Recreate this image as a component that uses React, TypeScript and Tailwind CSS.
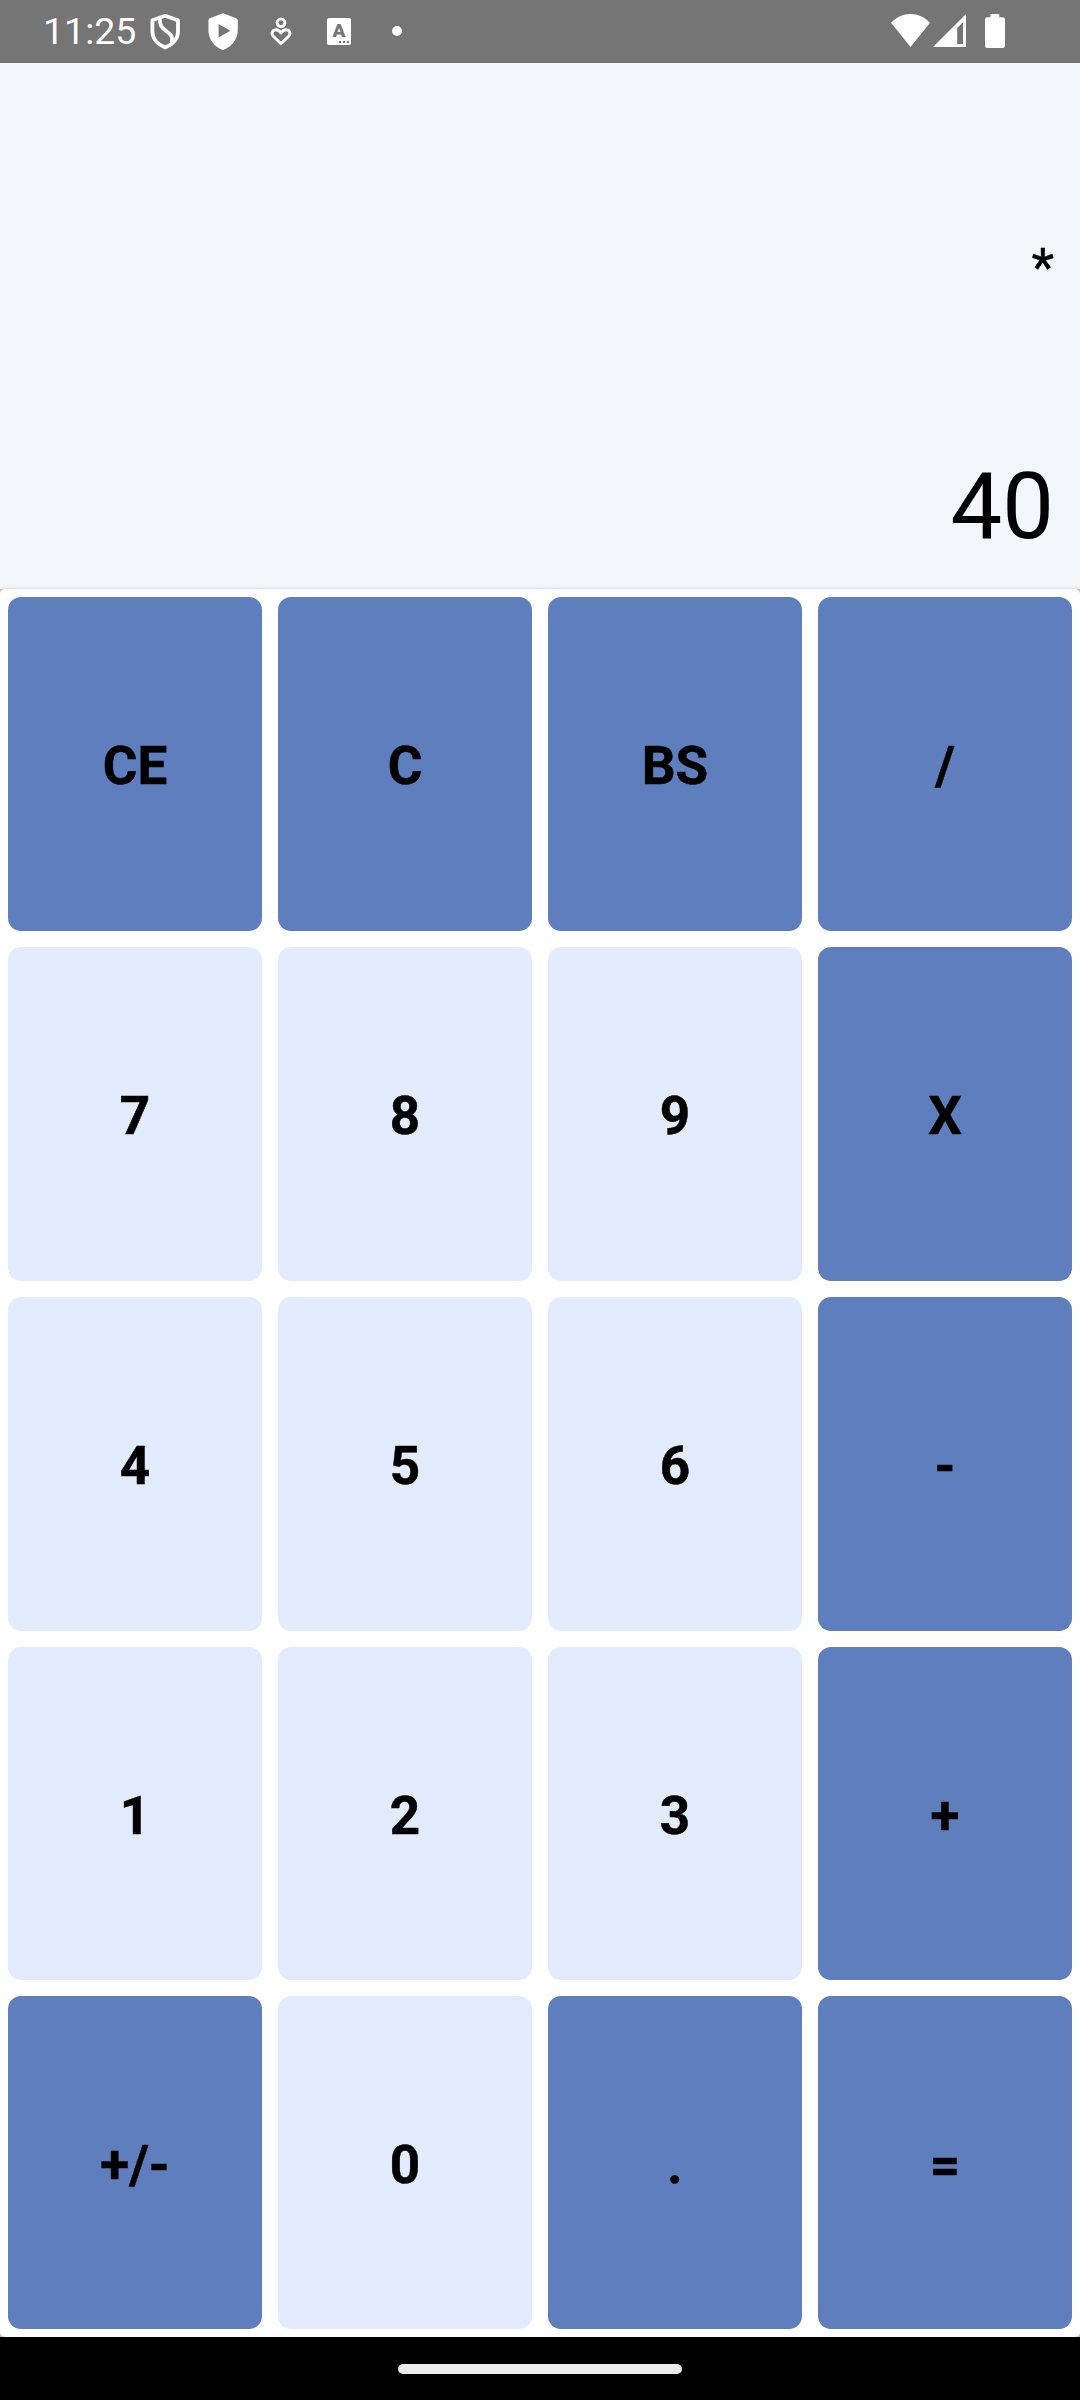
import React from "react";

const operatorKeys = ["CE", "C", "BS", "/", "X", "-", "+", "+/-", ".", "="];

const keys = [
  "CE", "C", "BS", "/",
  "7", "8", "9", "X",
  "4", "5", "6", "-",
  "1", "2", "3", "+",
  "+/-", "0", ".", "=",
];

function StatusBar() {
  return (
    <header className="flex h-[63px] shrink-0 items-start bg-[#757575] text-white">
      <span className="ml-[43px] mt-[10px] w-[94px] whitespace-nowrap text-[37.5px] leading-[43px]">11:25</span>
      <svg className="ml-3 mt-3 h-10 w-8" viewBox="0 0 32 40" fill="none" stroke="currentColor" strokeWidth="3.8" strokeLinejoin="round">
        <path d="M16.2 3.8 29 8.2V19.5C29 27 23.5 32.8 16.2 35.6 9 32.8 3.4 27 3.4 19.5V8.2Z" />
        <path d="M10.8 6.2C10.5 13.5 12.8 15.8 17.5 19.2C22.5 22.8 24.2 24.8 22.8 31" />
      </svg>
      <svg className="ml-[26px] mt-3 h-10 w-8" viewBox="0 0 32 40" fill="currentColor">
        <path fillRule="evenodd" d="M16 1.2 29.4 6.2Q30.8 6.9 30.8 8.4V18C30.8 27.5 24.4 35.3 16 38 7.6 35.3 1.4 27.5 1.4 18V8.4Q1.4 6.9 2.8 6.2ZM11.6 12V25.6L23.4 18.8Z" />
      </svg>
      <svg className="ml-[31px] mt-4 h-8 w-[22px]" viewBox="0 0 22 32" fill="none" stroke="currentColor" strokeWidth="2.9" strokeLinejoin="round">
        <circle cx="11" cy="6.8" r="3.9" />
        <path d="M11 27.8 3.3 20.2C0.6 17.2 2.8 13.8 6 13.8 8.3 13.8 9.8 15.2 11 17 12.2 15.2 13.7 13.8 16 13.8 19.2 13.8 21.4 17.2 18.7 20.2Z" />
      </svg>
      <span className="relative ml-[35px] mt-[18px] flex h-[27px] w-6 justify-center rounded-[2px] bg-white">
        <span className="h-[22px] text-[19px] font-black leading-[26px] text-[#757575]">A</span>
        <svg className="absolute bottom-[2px] right-[2px] h-[2px] w-[10px]" viewBox="0 0 10 2" fill="#757575">
          <path d="M0 0h2v2H0zM4 0h2v2H4zM8 0h2v2H8z" />
        </svg>
      </span>
      <span className="ml-[41px] mt-[26px] size-[10px] rounded-full bg-white" />
      <svg className="ml-auto mt-[14px] h-[33px] w-[39px]" viewBox="0 0 39 33" fill="currentColor">
        <path d="M0 8.8C5.5 3 12 0 19.5 0S33.5 3 39 8.8L19.5 33Z" />
      </svg>
      <svg className="ml-[3px] mt-[14px] h-[33px] w-[33px]" viewBox="0 0 33 33" fill="currentColor">
        <path fillRule="evenodd" d="M33 0V33H0ZM30 8.2 24.2 14V30H30Z" />
      </svg>
      <svg className="ml-[19px] mr-[75px] mt-[14px] h-[34px] w-5" viewBox="0 0 20 34" fill="currentColor">
        <path d="M5.5 0h8.8v3.2h3.5Q20 3.2 20 5.4V31.8Q20 34 17.8 34H2.2Q0 34 0 31.8V5.4Q0 3.2 2.2 3.2H5.5Z" />
      </svg>
    </header>
  );
}

export default function App() {
  return (
    <div className="flex h-[2400px] w-[1080px] flex-col overflow-hidden bg-white font-[Roboto,sans-serif] text-black">
      <StatusBar />
      <section className="flex h-[526px] shrink-0 flex-col items-end bg-[#f4f6fc] pr-[26px]">
        <div className="mt-[173px] text-[52.5px] leading-[62px] [-webkit-text-stroke:0.4px_black]">*</div>
        <div className="mt-[155px] text-[92px] leading-[108px]">40</div>
      </section>
      <main className="min-h-0 flex-1 bg-[#dccdae]">
        <div className="grid h-full grid-cols-4 grid-rows-[334px_334px_334px_333px_333px] gap-4 rounded-[5px] bg-white p-2 shadow-[0_0_4px_rgba(0,0,0,0.13)]">
          {keys.map((key) => (
            <button
              key={key}
              className={
                operatorKeys.includes(key)
                  ? "flex items-center justify-center rounded-[13px] bg-[#5f7ebe] pt-1 text-[53px] font-bold leading-[62px] [-webkit-text-stroke:0.5px_black]"
                  : "flex items-center justify-center rounded-[13px] bg-[#e3ecff] pt-1 text-[53px] font-bold leading-[62px] [-webkit-text-stroke:0.5px_black]"
              }
            >
              {key}
            </button>
          ))}
        </div>
      </main>
      <footer className="flex h-[63px] shrink-0 items-start justify-center bg-black pt-[27px]">
        <div className="h-[10px] w-[284px] rounded-[5px] bg-[#ececec]" />
      </footer>
    </div>
  );
}
